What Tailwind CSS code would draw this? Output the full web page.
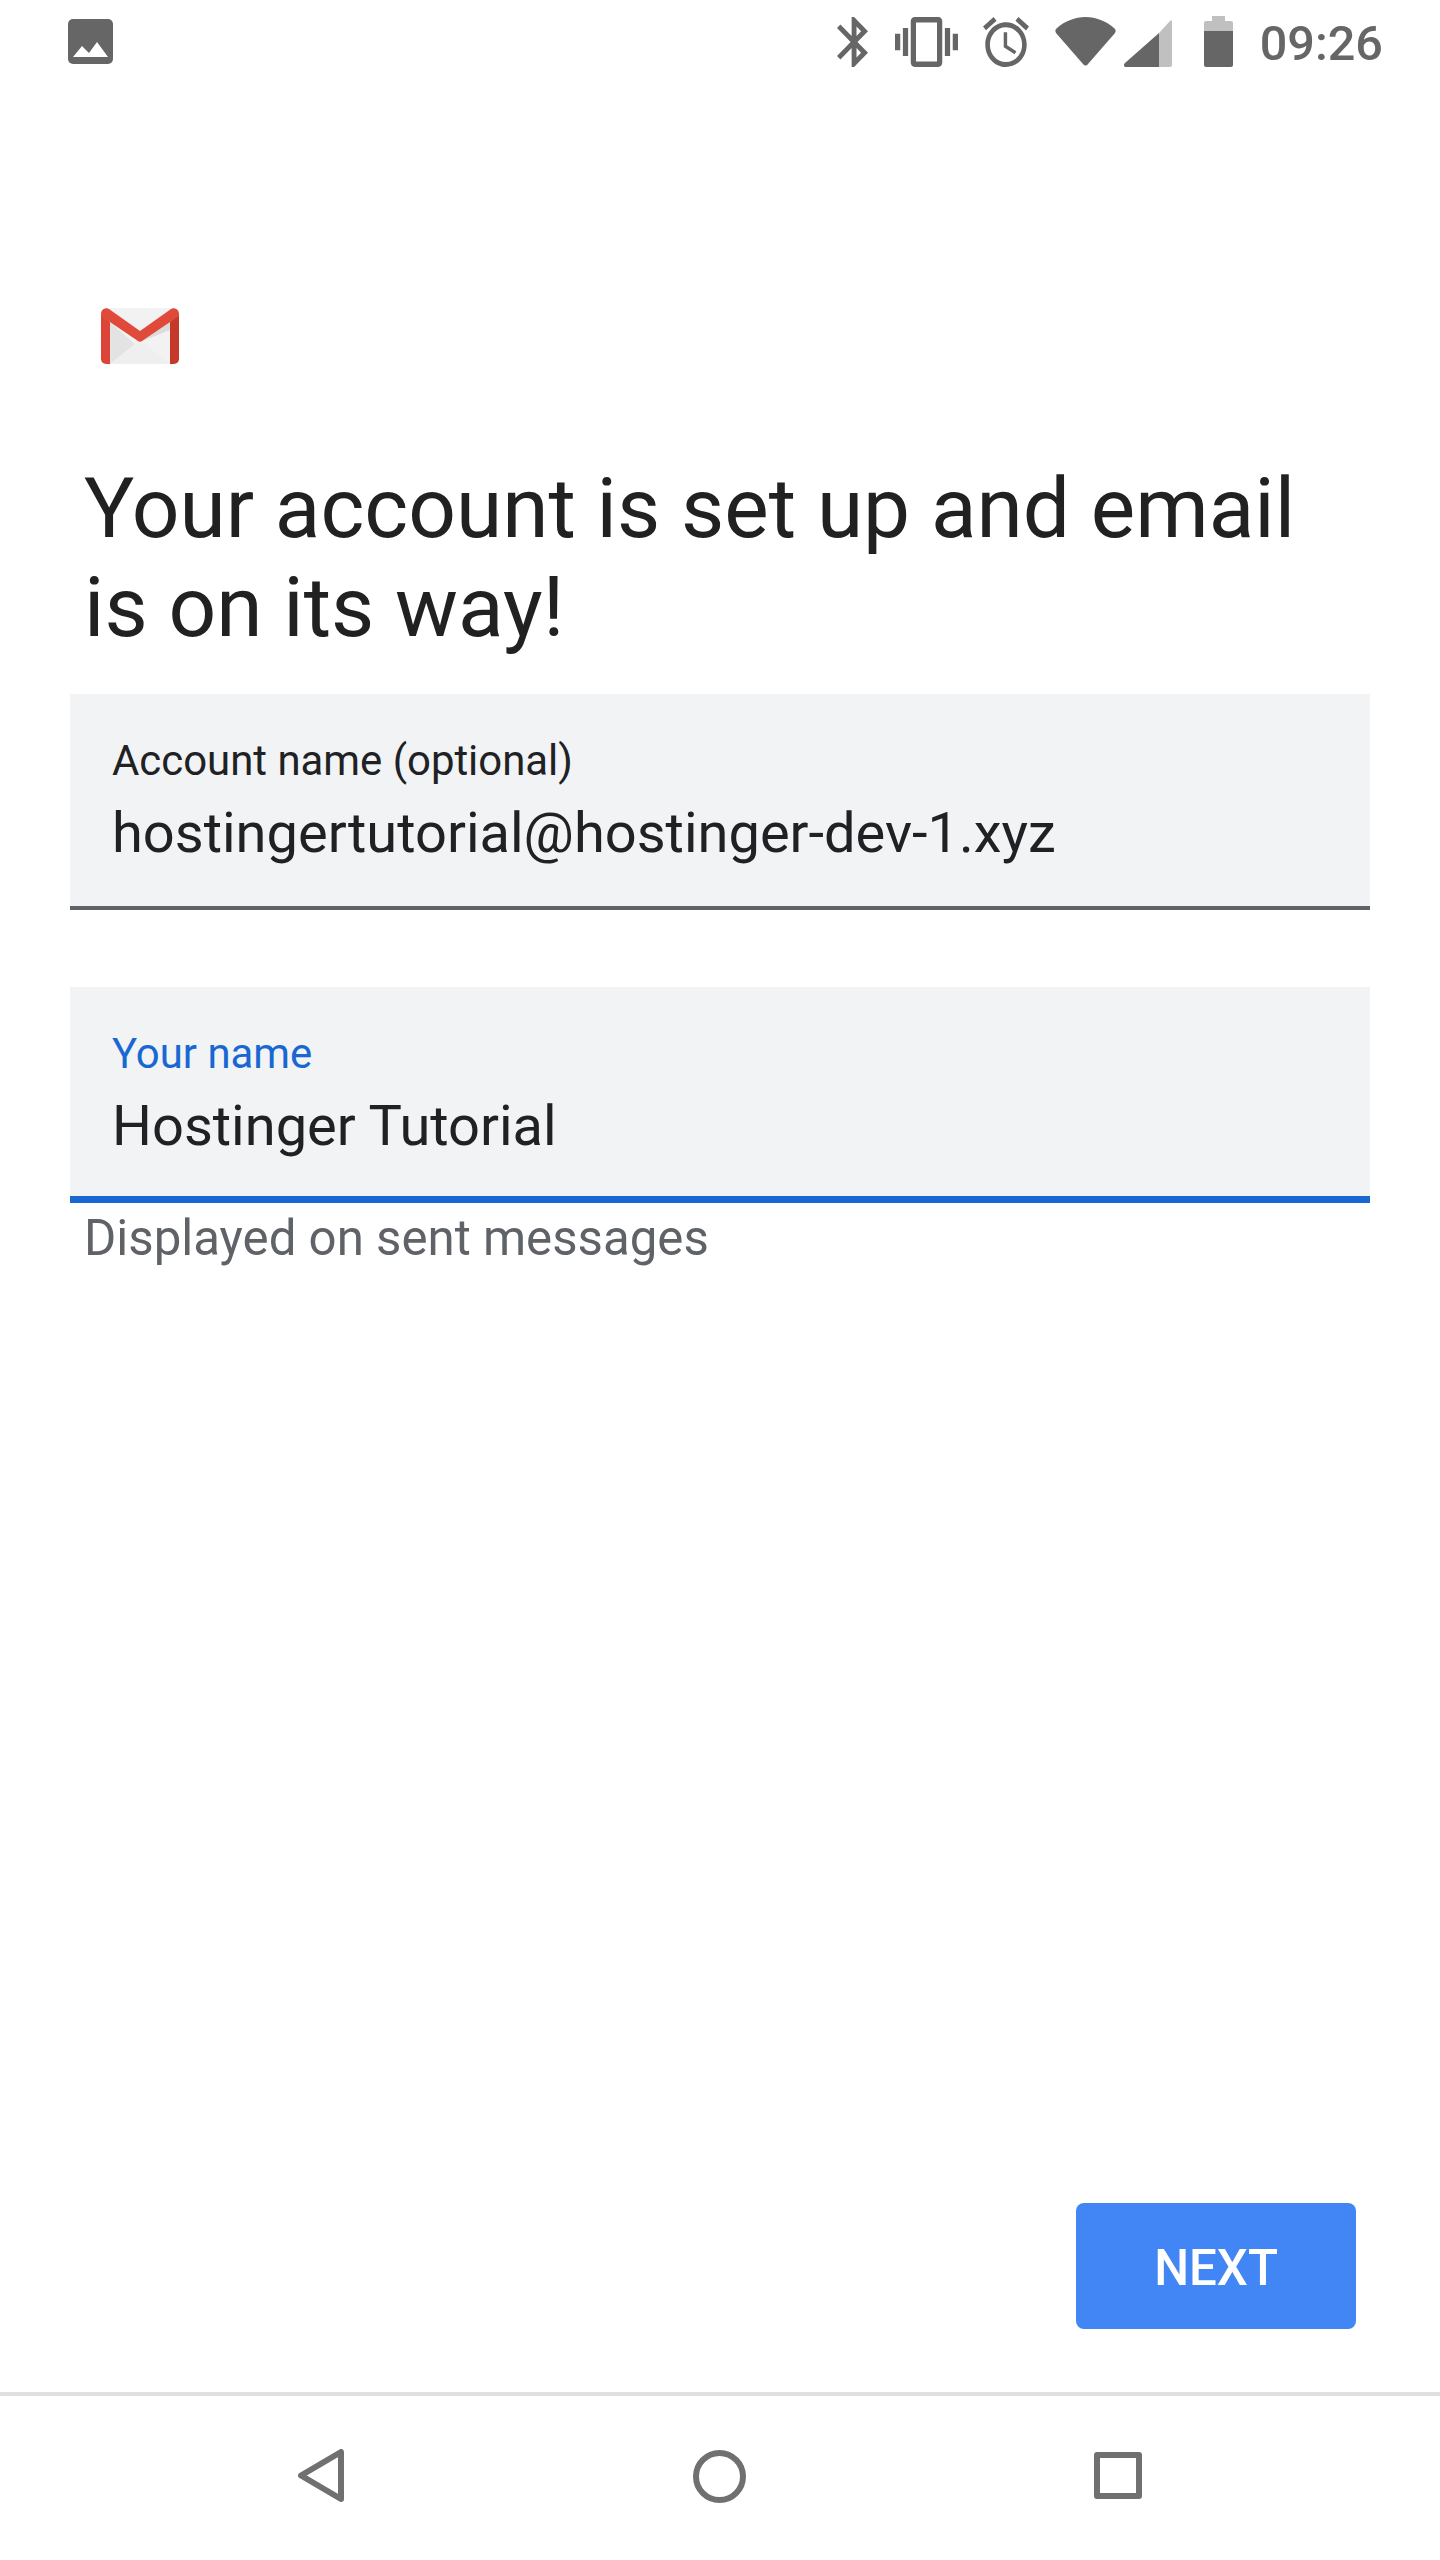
<!DOCTYPE html>
<html lang="en">
<head>
    <meta charset="UTF-8">
    <meta name="viewport" content="width=device-width, initial-scale=1.0">
    <title>Gmail setup</title>
    <script src="https://cdn.jsdelivr.net/npm/@tailwindcss/browser@4"></script>
</head>
<body class="bg-white font-['Roboto',sans-serif]">
    <div class="flex flex-col w-[1440px] h-[2560px] bg-white overflow-hidden">
        <!-- Status bar -->
        <div class="flex items-start h-[84px] pt-[16px] pl-[68px] pr-[57px] text-[#666666]">
            <svg class="mt-[3px] w-[45px] h-[45px]" viewBox="0 0 45 45"><rect width="45" height="45" rx="5" fill="#666666"/><path d="M5 38L14 27L21 34L29 23L40 38Z" fill="#ffffff"/></svg>
            <div class="flex-1"></div>
            <svg class="mt-[1px] w-[31px] h-[50px]" viewBox="5 2 12.71 20" preserveAspectRatio="none" fill="#666666"><path d="M17.71 7.71L12 2h-1v7.59L6.41 5 5 6.41 10.59 12 5 17.59 6.41 19 11 14.41V22h1l5.71-5.71-4.3-4.29 4.3-4.29zM13 5.83l1.88 1.88L13 9.59V5.83zm1.88 10.46L13 18.17v-3.76l1.88 1.88z"/></svg>
            <svg class="mt-[1px] ml-[27px] w-[63px] h-[50px]" viewBox="0 3 24 18" preserveAspectRatio="none" fill="#666666"><path d="M0 15h2V9H0v6zm3 2h2V7H3v10zm19-8v6h2V9h-2zm-3 8h2V7h-2v10zM16.5 3h-9C6.67 3 6 3.67 6 4.5v15c0 .83.67 1.5 1.5 1.5h9c.83 0 1.5-.67 1.5-1.5v-15c0-.83-.67-1.5-1.5-1.5zM16 19H8V5h8v14z"/></svg>
            <svg class="mt-[1px] ml-[25px] w-[46px] h-[50px]" viewBox="2 1.86 20 20.14" preserveAspectRatio="none" fill="#666666"><path d="M22 5.72l-4.6-3.86-1.29 1.53 4.6 3.86L22 5.72zM7.88 3.39L6.6 1.86 2 5.71l1.29 1.53 4.59-3.85zM12.5 8H11v6l4.75 2.85.75-1.23-4-2.37V8zM12 4c-4.97 0-9 4.03-9 9s4.03 9 9 9 9-4.03 9-9-4.03-9-9-9zm0 16c-3.87 0-7-3.13-7-7s3.13-7 7-7 7 3.13 7 7-3.13 7-7 7z"/></svg>
            <svg class="mt-[1px] ml-[26px] w-[61px] h-[50px]" viewBox="0 0 61 50" fill="#666666"><path d="M2 11C10 4 20 0 30.5 0S51 4 59 11c2 1.5 2 3 1 5L33 47c-1.5 2-3.5 2-5 0L1 16c-1-2-1-3.5 1-5z"/></svg>
            <svg class="mt-[4px] ml-[8px] w-[48px] h-[47px]" viewBox="0 0 48 47"><path d="M35 13L46 1c1-1 2-1 2 1v43c0 1-1 2-2 2H35z" fill="#c0c0c0"/><path d="M35 13V47H2c-2 0-3-2-1-4z" fill="#666666"/></svg>
            <svg class="ml-[32px] w-[29px] h-[51px]" viewBox="0 0 29 51"><path d="M8 0H21V5H27a2 2 0 0 1 2 2V15H0V7a2 2 0 0 1 2-2H8z" fill="#c0c0c0"/><path d="M0 15H29V49a2 2 0 0 1-2 2H2a2 2 0 0 1-2-2z" fill="#666666"/></svg>
            <span class="ml-[27px] text-[48.6px] leading-[56px] font-medium">09:26</span>
        </div>

        <!-- Gmail logo -->
        <svg class="ml-[101px] mt-[224px] w-[78px] h-[56px]" viewBox="0 0 78 56">
            <path d="M4 0H74V50a6 6 0 0 1-6 6H10a6 6 0 0 1-6-6z" fill="#f2f2f2"/>
            <path d="M9 14L34 36L9 56z" fill="#e3e3e3"/>
            <path d="M9 14L39 34L69 14V22L39 34z" fill="#dcdcdc"/>
            <path d="M9 56L34 36L39 34L44 36L69 56z" fill="#efefef"/>
            <path d="M69 14V56H73a5 5 0 0 0 5-5V6z" fill="#c5392b"/>
            <path d="M0 6V51a5 5 0 0 0 5 5H9V14z" fill="#db4437"/>
            <path d="M0 6C0 1 5-1 8 1L39 23L70 1C73-1 78 1 78 6C78 8 77 9 75 10L41 33C40 34 38 34 37 33L3 10C1 9 0 8 0 6z" fill="#e04a3b"/>
        </svg>

        <!-- Heading -->
        <h1 class="mt-[95px] ml-[84px] text-[83.8px] leading-[99px] font-normal text-[#212121]">Your account is set up and email<br>is on its way!</h1>

        <!-- Account name -->
        <div class="mt-[37px] mx-[70px] h-[216px] flex flex-col pt-[41px] pl-[42px] bg-[#f1f3f4] border-b-[4px] border-[#5f6368]">
            <span class="text-[41.9px] leading-[52px] text-[#202124]">Account name (optional)</span>
            <span class="mt-[13px] text-[56px] leading-[66px] text-[#202124]">hostingertutorial@hostinger-dev-1.xyz</span>
        </div>

        <!-- Your name -->
        <div class="mt-[77px] mx-[70px] h-[216px] flex flex-col pt-[41px] pl-[42px] bg-[#f1f3f4] border-b-[7px] border-[#1967d2]">
            <span class="text-[41.9px] leading-[52px] text-[#1967d2]">Your name</span>
            <span class="mt-[13px] text-[56px] leading-[66px] text-[#202124]">Hostinger Tutorial</span>
        </div>
        <p class="mt-[7px] ml-[84px] text-[49.2px] leading-[56px] text-[#5f6368]">Displayed on sent messages</p>

        <div class="flex-1"></div>

        <!-- Next -->
        <div class="flex justify-end pr-[84px] pb-[63px]">
            <button class="w-[280px] h-[126px] pt-[5px] rounded-[8px] bg-[#4285f4] text-white text-[49.2px] font-medium">NEXT</button>
        </div>

        <!-- Nav bar -->
        <div class="relative h-[168px] border-t-[4px] border-[#e0e0e0]">
            <svg class="absolute left-[298px] top-[53px] w-[46px] h-[53px]" viewBox="0 0 46 53" fill="none" stroke="#707070" stroke-width="6" stroke-linejoin="round"><path d="M43 3V50L3 26.5z"/></svg>
            <div class="absolute left-[693px] top-[54px] w-[53px] h-[53px] rounded-full border-[6px] border-[#707070]"></div>
            <div class="absolute left-[1094px] top-[56px] w-[48px] h-[47px] rounded-[3px] border-[6px] border-[#707070]"></div>
        </div>
    </div>
</body>
</html>
